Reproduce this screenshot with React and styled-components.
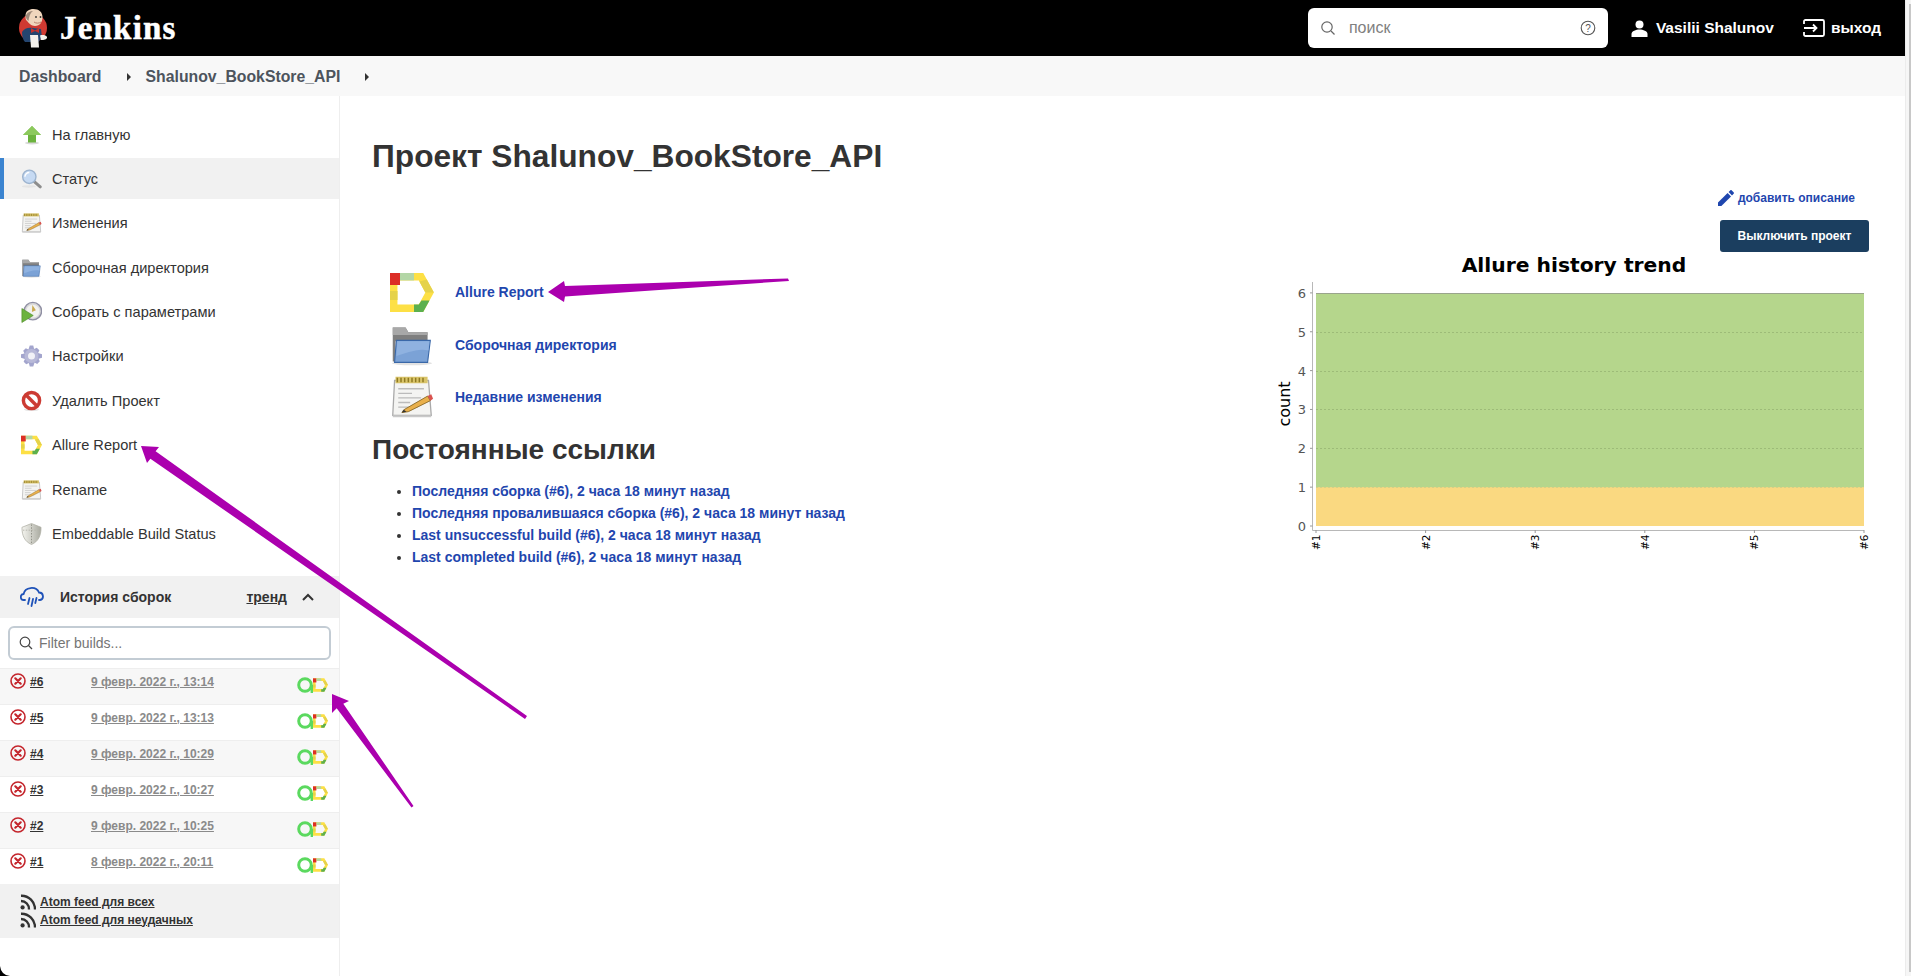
import React from "react";
import styled, { createGlobalStyle } from "styled-components";

const GlobalStyle = createGlobalStyle`
  html, body {
    margin: 0;
    padding: 0;
    background: #fff;
    overflow: hidden;
  }
  body {
    font-family: "Liberation Sans", Arial, sans-serif;
    color: #333;
  }
`;

const Page = styled.div`
  position: relative;
  width: 1911px;
  height: 976px;
  overflow: hidden;
  display: flex;
  flex-direction: column;
  background: #fff;
`;

const Header = styled.header`
  height: 56px;
  flex: none;
  background: #000;
  display: flex;
  align-items: center;
  padding: 0 6px 0 19px;
`;

const Brand = styled.div`
  display: flex;
  align-items: center;
  gap: 12px;
  margin-right: auto;
`;

const BrandName = styled.span`
  font-family: "Liberation Serif", serif;
  font-weight: 700;
  font-size: 33px;
  letter-spacing: 1.2px;
  color: #fff;
  -webkit-text-stroke: 0.5px #fff;
`;

const SearchBox = styled.div`
  width: 300px;
  height: 40px;
  box-sizing: border-box;
  background: #fff;
  border-radius: 6px;
  display: flex;
  align-items: center;
  padding: 0 12px;
  gap: 13px;
  margin-right: 23px;
  font-size: 16px;
  color: #808080;
`;

const SearchText = styled.span`
  flex: 1;
`;

const UserLink = styled.a`
  display: flex;
  align-items: center;
  gap: 8px;
  color: #fff;
  font-weight: 700;
  font-size: 15.5px;
  margin-right: 29px;
`;

const LogoutLink = styled.a`
  display: flex;
  align-items: center;
  gap: 6px;
  color: #fff;
  font-weight: 700;
  font-size: 15.5px;
  margin-right: 24px;
`;

const Crumbs = styled.nav`
  height: 40px;
  box-sizing: border-box;
  flex: none;
  background: #f8f8f8;
  display: flex;
  align-items: center;
  padding: 2px 0 0 19px;
  margin-right: 6px;
  font-size: 15.8px;
  font-weight: 700;
  color: #4d545d;
`;

const CrumbCaret = styled.span`
  width: 0;
  height: 0;
  border-left: 4px solid #333;
  border-top: 4px solid transparent;
  border-bottom: 4px solid transparent;
  margin: 0 ${(p) => p.$after}px 0 ${(p) => p.$before}px;
`;

const Body = styled.div`
  flex: 1;
  display: flex;
  min-height: 0;
`;

const Side = styled.aside`
  width: 339px;
  flex: none;
  border-right: 1px solid #eee;
  padding-top: 18px;
  box-sizing: content-box;
`;

const Tasks = styled.div`
  display: flex;
  flex-direction: column;
  gap: 3.4px;
`;

const Task = styled.a`
  height: 41px;
  display: flex;
  align-items: center;
  gap: 10px;
  padding-left: ${(p) => (p.$active ? "17px" : "21px")};
  font-size: 14.6px;
  color: #333;
  background: ${(p) => (p.$active ? "#f1f1f1" : "transparent")};
  border-left: ${(p) => (p.$active ? "4px solid #3b84d0" : "0")};
`;

const IconSlot = styled.span`
  width: 21px;
  height: 24px;
  display: flex;
  align-items: center;
  justify-content: center;
  flex: none;
`;

const HistoryHead = styled.div`
  margin-top: 21px;
  height: 42px;
  background: #f1f1f1;
  display: flex;
  align-items: center;
  padding: 0 25px 0 20px;
  font-size: 14px;
  font-weight: 700;
  color: #333;
`;

const HistoryTitle = styled.span`
  margin-left: 16px;
  flex: 1;
`;

const Trend = styled.a`
  text-decoration: underline;
  margin-right: 15px;
`;

const Filter = styled.div`
  margin: 8px;
  height: 34px;
  box-sizing: border-box;
  border: 2px solid #c3ccd4;
  border-radius: 6px;
  display: flex;
  align-items: center;
  gap: 6px;
  padding-left: 9px;
  font-size: 14px;
  color: #757575;
`;

const BuildRow = styled.div`
  height: 36px;
  box-sizing: border-box;
  border-top: 1px solid #eee;
  background: ${(p) => (p.$odd ? "#f7f7f7" : "#fff")};
  display: flex;
  position: relative;
  padding: 4px 11px 0 10px;
`;

const BuildNum = styled.a`
  width: 61px;
  margin-left: 4px;
  font-size: 12px;
  font-weight: 700;
  color: #333;
  text-decoration: underline;
  line-height: 18px;
`;

const BuildDate = styled.a`
  flex: 1;
  font-size: 12px;
  font-weight: 700;
  color: #8a8a8a;
  text-decoration: underline;
  line-height: 18px;
`;

const Badges = styled.span`
  display: flex;
  align-items: center;
  height: 16px;
  margin-top: 4px;
`;

const Feeds = styled.div`
  background: #f1f1f1;
  height: 54px;
  padding: 10px 0 0 20px;
  box-sizing: border-box;
  display: flex;
  flex-direction: column;
  gap: 2px;
`;

const FeedRow = styled.div`
  display: flex;
  align-items: center;
  gap: 4px;
  height: 16px;
`;

const FeedLink = styled.a`
  font-size: 12px;
  font-weight: 700;
  color: #333;
  text-decoration: underline;
`;

const Main = styled.main`
  flex: 1;
  min-width: 0;
  padding: 0 37px 0 32px;
  margin-right: 5px;
  position: relative;
`;

const Title = styled.h1`
  margin: 42px 0 0;
  font-size: 31.7px;
  line-height: 37px;
  font-weight: 700;
  color: #333;
`;

const Columns = styled.div`
  display: flex;
  justify-content: space-between;
  margin-top: 15px;
`;

const Left = styled.div`
  padding-top: 78px;
`;

const ActionLinks = styled.div`
  display: flex;
  flex-direction: column;
  gap: 4.5px;
  padding-left: 18px;
`;

const ActionRow = styled.div`
  display: flex;
  align-items: center;
  gap: 21px;
  height: 48px;
`;

const ActionLink = styled.a`
  font-size: 14px;
  font-weight: 700;
  color: #1f46ae;
`;

const Heading = styled.h2`
  margin: 13px 0 0;
  font-size: 28px;
  line-height: 32px;
  font-weight: 700;
  color: #333;
`;

const PermaList = styled.ul`
  margin: 14px 0 0;
  padding: 0 0 0 40px;
  font-size: 14px;
  line-height: 22px;
  color: #333;
`;

const PermaLink = styled.a`
  font-weight: 700;
  color: #1f46ae;
`;

const Right = styled.div`
  width: 590px;
  display: flex;
  flex-direction: column;
  align-items: flex-end;
`;

const AddDescription = styled.a`
  display: flex;
  align-items: center;
  gap: 4px;
  margin: 0 14px 0 0;
  font-size: 12px;
  font-weight: 700;
  color: #1f46ae;
  height: 16px;
`;

const DisableButton = styled.button`
  margin: 14px 0 0;
  width: 149px;
  height: 32px;
  border: 0;
  border-radius: 3px;
  background: #1b3e5f;
  color: #fff;
  font-family: inherit;
  font-size: 12px;
  font-weight: 700;
`;

const ChartSvg = styled.svg`
  display: block;
  margin: -2px -6px 0 0;
`;

const Overlay = styled.svg`
  position: absolute;
  left: 0;
  top: 0;
  pointer-events: none;
`;

const ScrollTrack = styled.div`
  position: absolute;
  right: 0;
  top: 0;
  bottom: 0;
  width: 6px;
  background: #f6f6f6;
  border-left: 1px solid #ececec;
  box-sizing: border-box;
`;

const ScrollThumb = styled.div`
  position: absolute;
  right: 0;
  top: 4px;
  bottom: 4px;
  width: 2px;
  background: #c8c8c8;
`;

const UpArrow = () => (
  <svg width="20" height="20" viewBox="0 0 20 20">
    <ellipse cx="10" cy="18" rx="7" ry="1.4" fill="#d9d9d9" />
    <path d="M10 1 19 10H14V17.5H6V10H1Z" fill="#6cb33e" />
    <path d="M10 1 19 10H1Z" fill="#8cc95c" />
  </svg>
);

const Magnifier = () => (
  <svg width="24" height="24" viewBox="0 0 24 24">
    <ellipse cx="9" cy="20.5" rx="8" ry="1.5" fill="#e4e4e4" />
    <path d="M14.5 14.5 22 21" stroke="#8d8d8d" strokeWidth="3.4" strokeLinecap="round" />
    <circle cx="9.5" cy="9.5" r="7.6" fill="#c6daf3" stroke="#9db4cf" strokeWidth="1.6" />
    <path d="M4.5 9.5a5 5 0 0 1 5-5" stroke="#fff" strokeWidth="1.6" fill="none" />
  </svg>
);

const Notepad = ({ size = 22 }) => (
  <svg width={size} height={size} viewBox="0 0 48 48">
    <path d="M5 6H42L45 44H3Z" fill="#f4f4f2" stroke="#a9a9a9" strokeWidth="1.4" />
    <path d="M3 44H45V46H3Z" fill="#c9c9c9" />
    <path d="M6 2H41V9H6Z" fill="#d9c46a" />
    <path d="M8 3V8M12 3V8M16 3V8M20 3V8M24 3V8M28 3V8M32 3V8M36 3V8" stroke="#8f7a22" strokeWidth="1.6" />
    <path d="M9 15H37M9 20H24M9 25H34M9 30H22M9 35H30" stroke="#bbb" strokeWidth="1.4" />
    <path d="M15 38 41 23 44 28 20 40 13 41Z" fill="#e9b04b" stroke="#8a6a2a" strokeWidth="1" />
    <path d="M41 23 45 21 47 26 44 28Z" fill="#d9534f" />
    <path d="M13 41 15 38 18 40Z" fill="#333" />
  </svg>
);

const Folder = ({ size = 22 }) => (
  <svg width={size} height={size} viewBox="0 0 48 48">
    <ellipse cx="24" cy="44" rx="22" ry="2" fill="#e2e2e2" />
    <path d="M3 5H17L20 10H41V20H6V42H3Z" fill="#7f7f7f" />
    <path d="M3 5H17L20 10H41V13H3Z" fill="#a8a8a8" />
    <path d="M7 19H44L41 43H5Z" fill="#7ba2d6" stroke="#3a68a8" strokeWidth="1.2" />
    <path d="M8 20H43L42 30C30 27 18 33 7 36Z" fill="#8fb2e0" />
  </svg>
);

const ClockPlay = () => (
  <svg width="24" height="24" viewBox="0 0 24 24">
    <circle cx="13.5" cy="11" r="10" fill="#d9d9d9" stroke="#8f8fa3" strokeWidth="1.6" />
    <circle cx="13.5" cy="11" r="7.4" fill="#f2f2f0" />
    <path d="M13 4 17 10 12.5 12Z" fill="#c9a94f" />
    <path d="M1 8 14 16 1 24Z" fill="#6cb33e" stroke="#4f8a2b" strokeWidth="0.7" />
  </svg>
);

const Gear = () => (
  <svg width="24" height="24" viewBox="0 0 24 24">
    <path
      d="M10 0H14L15 4 18 2.5 21 5.5 19.5 8.5 24 10V14L20 15 21.5 18 18.5 21 15.5 19.5 14 24H10L9 20 6 21.5 3 18.5 4.5 15.5 0 14V10L4 9 2.5 6 5.5 3 8.5 4.5Z"
      fill="#a3a5cd"
    />
    <circle cx="12" cy="12" r="8" fill="#b8b9d8" />
    <circle cx="12" cy="12" r="4" fill="#f2f2f7" />
  </svg>
);

const NoSign = () => (
  <svg width="22" height="22" viewBox="0 0 22 22">
    <ellipse cx="11" cy="20" rx="8" ry="1.6" fill="#e6e6e6" />
    <circle cx="11" cy="10.5" r="8.5" fill="#fff" stroke="#cc3b33" strokeWidth="3.6" />
    <path d="M5 4.5 17 16.5" stroke="#cc3b33" strokeWidth="3.6" />
  </svg>
);

const AllureD = ({ width = 22, height = 20 }) => (
  <svg width={width} height={height} viewBox="0 0 44 39">
    <path d="M3.7 3.7H31L39.6 19.5 31 35.3H3.7Z" fill="none" stroke="#fde045" strokeWidth="7.5" />
    <path d="M0 0H10V12H0Z" fill="#dc2e26" />
    <path d="M10 0H24V7.4H10Z" fill="#b3d6a6" />
    <path d="M36.8 6.5 43.9 19.5H35.3L29.4 8.5Z" fill="#e5d24a" />
    <path d="M0 18H7.5V27H0Z" fill="#e5d24a" />
    <path d="M31.5 27.5H39.5L33.2 39H24V31.6H28.8Z" fill="#5cb04e" />
  </svg>
);

const ShieldIcon = () => (
  <svg width="22" height="24" viewBox="0 0 22 24">
    <defs>
      <linearGradient id="shieldFill" x1="0" x2="1" y1="0" y2="0">
        <stop offset="0" stopColor="#f5f5f0" />
        <stop offset="1" stopColor="#a9aaa0" />
      </linearGradient>
    </defs>
    <path d="M11 1 21 5C21 14 18 20 11 23 4 20 1 14 1 5Z" fill="url(#shieldFill)" stroke="#b0b0a6" strokeWidth="0.8" />
    <path d="M11 2V22" stroke="#8f8f85" strokeDasharray="1.5 1.5" />
    <path d="M2 8H20" stroke="#b6b6ac" strokeDasharray="1.5 1.5" />
  </svg>
);

const RainCloud = () => (
  <svg width="24" height="22" viewBox="0 0 24 22" fill="none" stroke="#1f52b8" strokeWidth="1.8" strokeLinecap="round">
    <path d="M5 14H4A3 3 0 0 1 3.6 8 8 7 0 0 1 19 6.5 3.8 3.8 0 0 1 20 14H19" />
    <path d="M9.5 12 8 18M13 13 11.5 20M16.5 12 15.3 17" />
  </svg>
);

const FailIcon = () => (
  <svg width="16" height="16" viewBox="0 0 16 16" fill="none" stroke="#c4252c" strokeLinecap="round">
    <circle cx="8" cy="8" r="7" strokeWidth="1.6" />
    <path d="M5.3 5.3 10.7 10.7M10.7 5.3 5.3 10.7" strokeWidth="2.2" />
  </svg>
);

const AllureA = () => (
  <svg width="16" height="16" viewBox="0 0 16 16" fill="none">
    <circle cx="8" cy="8" r="6.3" stroke="#5bd95f" strokeWidth="3" />
    <path d="M14.8 8V16" stroke="#5bd95f" strokeWidth="2.4" />
  </svg>
);

const Rss = () => (
  <svg width="16" height="16" viewBox="0 0 16 16" fill="none" stroke="#333" strokeWidth="2.4">
    <circle cx="2.6" cy="13.4" r="2.1" fill="#333" stroke="none" />
    <path d="M1 7a8 8 0 0 1 8 8.5" />
    <path d="M1 1.8a13.5 13.5 0 0 1 14 13.8" />
  </svg>
);

const Butler = () => (
  <svg width="29" height="40" viewBox="0 0 29 40">
    <circle cx="14" cy="20" r="14" fill="#cf3a32" />
    <path d="M3 24C5 20 10 19 14 20L22 21 23 30 19 34H6C4 32 3 28 3 24Z" fill="#24456f" />
    <path d="M6.5 8C6.5 3 10 1 14.5 1 20 1 23.5 4 23.5 9 23.5 14 21 18 16 18 12 18 10 15 8 13 6.5 12 6.5 10 6.5 8Z" fill="#f0d6bd" />
    <path d="M7 7C9 4 11 3 14 3 11 5 10 9 9.5 13 8 12 6.5 10 7 7Z" fill="#5a4a42" opacity="0.55" />
    <circle cx="17" cy="9" r="0.9" fill="#333" />
    <circle cx="21.5" cy="9" r="0.9" fill="#333" />
    <path d="M15 14C17 15.5 20 15.5 22 14" stroke="#b9806b" strokeWidth="1" fill="none" />
    <path d="M12 20 16 22.5 20 20 20 25 16 23 12 25Z" fill="#c5322d" />
    <path d="M11 27H19L20 39.5H12Z" fill="#f4f1ec" />
    <path d="M21 27.5C23 26.5 27 27 28 29 28.5 31 25 32.5 22 32Z" fill="#f4f1ec" />
  </svg>
);

const taskList = [
  { label: "На главную", icon: <UpArrow /> },
  { label: "Статус", icon: <Magnifier />, active: true },
  { label: "Изменения", icon: <Notepad /> },
  { label: "Сборочная директория", icon: <Folder /> },
  { label: "Собрать с параметрами", icon: <ClockPlay /> },
  { label: "Настройки", icon: <Gear /> },
  { label: "Удалить Проект", icon: <NoSign /> },
  { label: "Allure Report", icon: <AllureD /> },
  { label: "Rename", icon: <Notepad /> },
  { label: "Embeddable Build Status", icon: <ShieldIcon /> },
];

const builds = [
  { num: "#6", date: "9 февр. 2022 г., 13:14" },
  { num: "#5", date: "9 февр. 2022 г., 13:13" },
  { num: "#4", date: "9 февр. 2022 г., 10:29" },
  { num: "#3", date: "9 февр. 2022 г., 10:27" },
  { num: "#2", date: "9 февр. 2022 г., 10:25" },
  { num: "#1", date: "8 февр. 2022 г., 20:11" },
];

const permalinks = [
  "Последняя сборка (#6), 2 часа 18 минут назад",
  "Последняя провалившаяся сборка (#6), 2 часа 18 минут назад",
  "Last unsuccessful build (#6), 2 часа 18 минут назад",
  "Last completed build (#6), 2 часа 18 минут назад",
];

// chart coords are local to the svg, which starts at x 1275, y 250
const chartX = (px) => px - 1275;
const chartY = (py) => py - 250;
const yTicks = [0, 1, 2, 3, 4, 5, 6];
const xTicks = [1, 2, 3, 4, 5, 6];
const tickY = (n) => chartY(526 - n * 38.85);
const tickX = (n) => chartX(1316 + (n - 1) * 109.6);

const TrendChart = () => (
  <ChartSvg width="600" height="312" viewBox="0 0 600 312">
    <text
      x={chartX(1574)}
      y="22"
      textAnchor="middle"
      fontFamily="DejaVu Sans, sans-serif"
      fontWeight="700"
      fontSize="20.3"
      fill="#000"
    >
      Allure history trend
    </text>
    <rect x={chartX(1316)} y={chartY(293)} width="548" height="233" fill="#b5d68c" />
    <rect x={chartX(1316)} y={tickY(1)} width="548" height={chartY(526) - tickY(1)} fill="#fad981" />
    {yTicks.slice(1).map((n) => (
      <line
        key={n}
        x1={chartX(1316)}
        x2={chartX(1864)}
        y1={Math.round(tickY(n)) + 0.5}
        y2={Math.round(tickY(n)) + 0.5}
        stroke={n === 1 ? "#d6cf86" : n === 6 ? "#9aa58c" : "#9dbb78"}
        strokeDasharray={n === 6 ? "none" : "2 2"}
      />
    ))}
    <path d={`M${chartX(1312.5)} ${chartY(282)}V${chartY(530.5)}H${chartX(1864)}`} fill="none" stroke="#b8b8b8" />
    {yTicks.map((n) => (
      <g key={n}>
        <line x1={chartX(1310)} x2={chartX(1312.5)} y1={tickY(n)} y2={tickY(n)} stroke="#999" />
        <text
          x={chartX(1306)}
          y={tickY(n) + 5}
          textAnchor="end"
          fontFamily="DejaVu Sans, sans-serif"
          fontSize="13"
          fill="#555"
        >
          {n}
        </text>
      </g>
    ))}
    {xTicks.map((n) => (
      <g key={n}>
        <line x1={tickX(n)} x2={tickX(n)} y1={chartY(530)} y2={chartY(533)} stroke="#999" />
        <text
          transform={`translate(${tickX(n) + 4} ${chartY(550)}) rotate(-90)`}
          fontFamily="DejaVu Sans, sans-serif"
          fontSize="10.5"
          fill="#000"
        >
          #{n}
        </text>
      </g>
    ))}
    <text
      transform={`translate(${chartX(1290)} ${chartY(404)}) rotate(-90)`}
      textAnchor="middle"
      fontFamily="DejaVu Sans, sans-serif"
      fontSize="16"
      fill="#000"
    >
      count
    </text>
  </ChartSvg>
);

const App = () => {
  return (
    <Page>
      <GlobalStyle />
      <Header>
        <Brand>
          <Butler />
          <BrandName>Jenkins</BrandName>
        </Brand>
        <SearchBox>
          <svg width="16" height="16" viewBox="0 0 16 16" fill="none" stroke="#666" strokeWidth="1.2">
            <circle cx="7" cy="7" r="5.2" />
            <path d="M11 11 14.5 14.5" />
          </svg>
          <SearchText>поиск</SearchText>
          <svg width="16" height="16" viewBox="0 0 16 16" fill="none">
            <circle cx="8" cy="8" r="6.8" stroke="#555" strokeWidth="1.1" />
            <text x="8" y="11.5" textAnchor="middle" fontSize="10" fontFamily="Liberation Sans" fill="#555">
              ?
            </text>
          </svg>
        </SearchBox>
        <UserLink>
          <svg width="17" height="17" viewBox="0 0 17 17" fill="#fff">
            <circle cx="8.5" cy="4.5" r="4" />
            <path d="M0.5 17V14C0.5 11 5 9.5 8.5 9.5S16.5 11 16.5 14V17Z" />
          </svg>
          Vasilii Shalunov
        </UserLink>
        <LogoutLink>
          <svg width="22" height="18" viewBox="0 0 22 18" fill="none" stroke="#fff" strokeWidth="1.8">
            <path d="M1 5V2.5C1 1.5 1.6 1 2.5 1H19.5C20.5 1 21 1.5 21 2.5V15.5C21 16.5 20.5 17 19.5 17H2.5C1.6 17 1 16.5 1 15.5V13" />
            <path d="M1 9H13M10 5.5 13.5 9 10 12.5" />
          </svg>
          выход
        </LogoutLink>
      </Header>
      <Crumbs>
        Dashboard
        <CrumbCaret $before={25} $after={15} />
        Shalunov_BookStore_API
        <CrumbCaret $before={25} $after={0} />
      </Crumbs>
      <Body>
        <Side>
          <Tasks>
            {taskList.map((task) => (
              <Task key={task.label} $active={task.active}>
                <IconSlot>{task.icon}</IconSlot>
                {task.label}
              </Task>
            ))}
          </Tasks>
          <HistoryHead>
            <RainCloud />
            <HistoryTitle>История сборок</HistoryTitle>
            <Trend>тренд</Trend>
            <svg width="12" height="8" viewBox="0 0 12 8" fill="none" stroke="#333" strokeWidth="2">
              <path d="M1 7 6 2 11 7" />
            </svg>
          </HistoryHead>
          <Filter>
            <svg width="14" height="14" viewBox="0 0 14 14" fill="none" stroke="#444" strokeWidth="1.2">
              <circle cx="6" cy="6" r="4.8" />
              <path d="M9.5 9.5 13 13" />
            </svg>
            Filter builds...
          </Filter>
          {builds.map((build, i) => (
            <BuildRow key={build.num} $odd={i % 2 === 0}>
              <FailIcon />
              <BuildNum>{build.num}</BuildNum>
              <BuildDate>{build.date}</BuildDate>
              <Badges>
                <AllureA />
                <AllureD width={15} height={14} />
              </Badges>
            </BuildRow>
          ))}
          <Feeds>
            <FeedRow>
              <Rss />
              <FeedLink>Atom feed для всех</FeedLink>
            </FeedRow>
            <FeedRow>
              <Rss />
              <FeedLink>Atom feed для неудачных</FeedLink>
            </FeedRow>
          </Feeds>
        </Side>
        <Main>
          <Title>Проект Shalunov_BookStore_API</Title>
          <Columns>
            <Left>
              <ActionLinks>
                <ActionRow>
                  <AllureD width={44} height={39} />
                  <ActionLink>Allure Report</ActionLink>
                </ActionRow>
                <ActionRow>
                  <Folder size={44} />
                  <ActionLink>Сборочная директория</ActionLink>
                </ActionRow>
                <ActionRow>
                  <Notepad size={44} />
                  <ActionLink>Недавние изменения</ActionLink>
                </ActionRow>
              </ActionLinks>
              <Heading>Постоянные ссылки</Heading>
              <PermaList>
                {permalinks.map((text) => (
                  <li key={text}>
                    <PermaLink>{text}</PermaLink>
                  </li>
                ))}
              </PermaList>
            </Left>
            <Right>
              <AddDescription>
                <svg width="16" height="16" viewBox="0 0 16 16" fill="#1f46ae">
                  <path d="M0 16V12.6L9.6 3 13 6.4 3.4 16Z" />
                  <path d="M10.6 2 12.2 0.4C12.7-0.1 13.3-0.1 13.8 0.4L15.6 2.2C16.1 2.7 16.1 3.3 15.6 3.8L14 5.4Z" />
                </svg>
                добавить описание
              </AddDescription>
              <DisableButton>Выключить проект</DisableButton>
              <TrendChart />
            </Right>
          </Columns>
        </Main>
      </Body>
      <ScrollTrack>
        <ScrollThumb />
      </ScrollTrack>
      <Overlay width="1911" height="976" viewBox="0 0 1911 976">
        <g fill="#ab00ae">
          <path d="M788 278.5 789 281 565 296.5 564 302 548 292 564 281 565 286Z" />
          <path d="M141 446 159 447 155.6 451.3 527 716 525 719 150.4 458.7 147 463Z" />
          <path d="M332 694 349 701 343.3 703.7 413.5 806 411.5 807.5 336.7 708.3 332 713Z" />
        </g>
        <path d="M0 966Q1 975 10 976H0Z" fill="#000" />
      </Overlay>
    </Page>
  );
};

export default App;
